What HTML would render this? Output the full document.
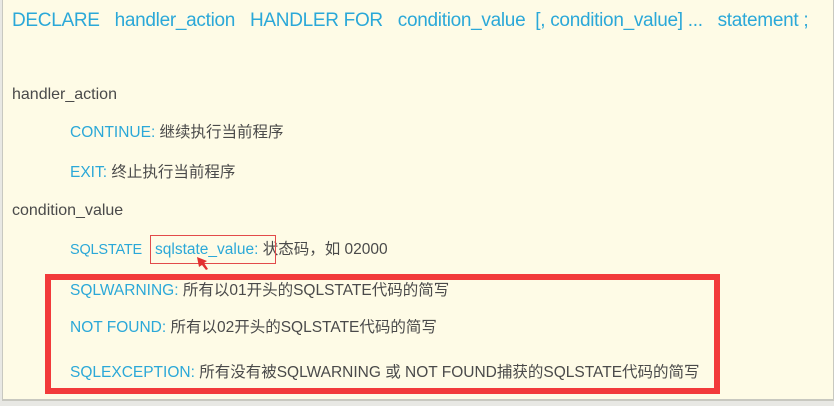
<!DOCTYPE html>
<html><head><meta charset="utf-8"><style>
body{margin:0;width:834px;height:406px;background:#e8e8e4;position:relative;overflow:hidden;font-family:"Liberation Sans","Noto Sans CJK SC",sans-serif;}
.bg{position:absolute;left:2px;top:0;width:830px;height:399px;background:#fefbe6;border-left:1px solid #c8c8c0;border-right:1px solid #c8c8c0;border-bottom:2px solid #c8c8c0;}
.t{position:absolute;white-space:nowrap;font-size:15.5px;color:#4a4a4a;line-height:18px;}
.b{color:#2ba8d8;}
.h{font-size:19px;letter-spacing:-0.3px;}
.box{position:absolute;left:150px;top:235px;width:124px;height:27px;border:1px solid #e24a4a;}
.red{position:absolute;left:45px;top:274px;width:663px;height:108px;border:6px solid #f23a3a;}
</style></head><body>
<div class="bg"></div>
<div class="t b h" style="left:12px;top:12px">DECLARE&nbsp;&nbsp; handler_action&nbsp;&nbsp; HANDLER FOR&nbsp;&nbsp; condition_value&nbsp; [, condition_value] ...&nbsp;&nbsp; statement ;</div>
<div class="t" style="left:12px;top:86px;font-size:16px">handler_action</div>
<div class="t" style="left:70px;top:124px"><span class="b">CONTINUE:</span> 继续执行当前程序</div>
<div class="t" style="left:70px;top:164px"><span class="b">EXIT:</span> 终止执行当前程序</div>
<div class="t" style="left:12px;top:202px;font-size:16px">condition_value</div>
<div class="t" style="left:70px;top:241px;font-size:14.5px;letter-spacing:-0.2px"><span class="b">SQLSTATE</span></div>
<div class="t" style="left:155px;top:241px"><span class="b">sqlstate_value:</span> 状态码，如 02000</div>
<div class="box"></div>
<svg style="position:absolute;left:194px;top:255px" width="18" height="18"><polygon points="3,2 13,6 10,8 14,14 12,15 8,10 5,12" fill="#e23030"/></svg>
<div class="red"></div>
<div class="t" style="left:70px;top:282px"><span class="b">SQLWARNING:</span> 所有以01开头的SQLSTATE代码的简写</div>
<div class="t" style="left:70px;top:319px"><span class="b">NOT FOUND:</span> 所有以02开头的SQLSTATE代码的简写</div>
<div class="t" style="left:70px;top:364px"><span class="b">SQLEXCEPTION:</span> 所有没有被SQLWARNING 或 NOT FOUND捕获的SQLSTATE代码的简写</div>
</body></html>
